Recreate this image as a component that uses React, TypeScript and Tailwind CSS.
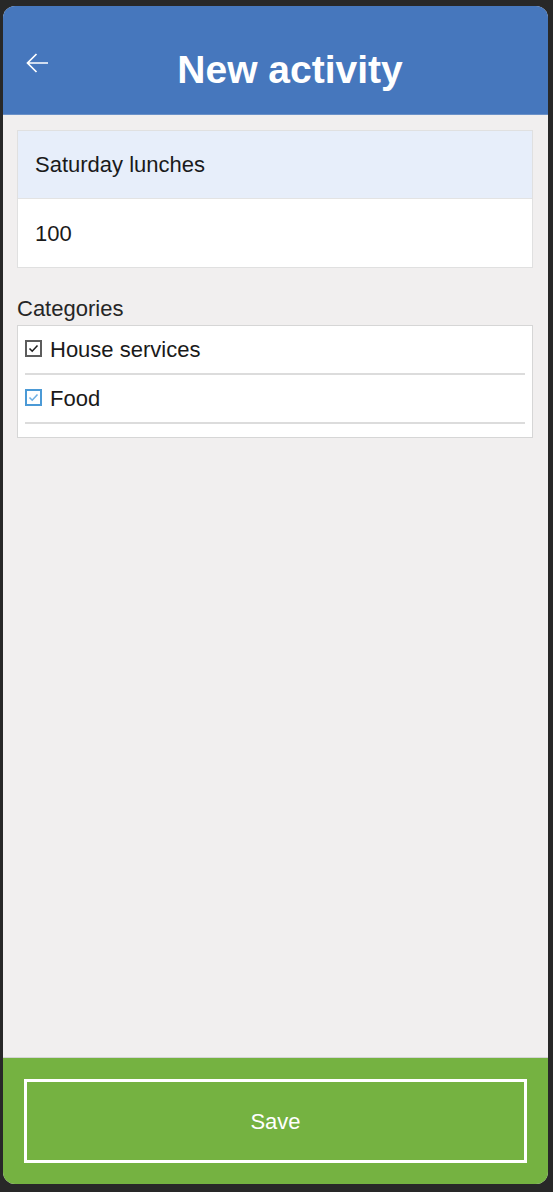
import { useState } from "react";

const font = { fontFamily: '"Liberation Sans", Arial, sans-serif' };

function CheckBox({ checked, accent }: { checked: boolean; accent?: boolean }) {
    const border = accent ? "#4b9ad6" : "#5c5c5c";
    const tick = accent ? "#6fb0e4" : "#1f1f1f";
    return (
        <svg width="17" height="17" viewBox="0 0 17 17" className="shrink-0 -mt-[3px]">
            <rect x="1" y="1" width="15" height="15" fill="#fff" stroke={border} strokeWidth="2" />
            {checked && <path d="M4.5 8.5 L7.2 11.2 L12.5 5.5" fill="none" stroke={tick} strokeWidth="1.6" />}
        </svg>
    );
}

export default function App() {
    const [cats, setCats] = useState([
        { name: "House services", checked: true, accent: false },
        { name: "Food", checked: true, accent: true },
    ]);

    return (
        <div className="min-h-screen bg-[#282828] pt-[6px] pl-[3px] pr-[5px] pb-[8px]" style={font}>
            <div className="h-[1178px] w-[545px] rounded-[12px] overflow-hidden flex flex-col bg-[#f1efef]">
                {/* Header */}
                <div className="h-[109px] shrink-0 bg-[#4677bd] border-b border-[#6b91c8] flex items-start pt-[45px] pl-[22px] pr-[17px]">
                    <svg width="24" height="22" viewBox="0 0 24 22" className="shrink-0 mt-[1px]">
                        <path d="M23 11 H2.5 M11.5 2 L2.5 11 L11.5 20" fill="none" stroke="#fff" strokeWidth="1.7" />
                    </svg>
                    <h1 className="flex-1 text-center text-white font-bold text-[39px] leading-none -mt-[1px]">New activity</h1>
                </div>

                {/* Content */}
                <div className="flex-1 pt-[15px] pl-[14px] pr-[15px]">
                    <div className="border border-[#e0e0e0] text-[22px] leading-[25px] text-[#1a1a1a]">
                        <div className="h-[68px] bg-[#e7eefa] border-b border-[#e3e3e3] flex items-center pl-[17px]">Saturday lunches</div>
                        <div className="h-[68px] bg-white flex items-center pl-[17px]">100</div>
                    </div>

                    <div className="mt-[28px] text-[22px] leading-[25px] text-[#262626]">Categories</div>

                    <div className="mt-[4px] bg-white border border-[#d6d6d6] px-[7px] pb-[13px]">
                        {cats.map((c, i) => (
                            <div
                                key={c.name}
                                className="h-[49px] border-b-2 border-[#dcdcdc] flex items-center gap-[8px] cursor-pointer"
                                onClick={() => setCats(cats.map((x, j) => (j === i ? { ...x, checked: !x.checked } : x)))}
                            >
                                <CheckBox checked={c.checked} accent={c.accent} />
                                <span className="text-[22px] leading-[25px] text-[#1a1a1a]">{c.name}</span>
                            </div>
                        ))}
                    </div>
                </div>

                {/* Footer */}
                <div className="h-[127px] shrink-0 bg-[#75b241] border-t border-[#d4d4d4] pt-[21px] px-[21px]">
                    <button className="w-full h-[84px] border-[3px] border-white text-white text-[22px] leading-[25px]">Save</button>
                </div>
            </div>
        </div>
    );
}
